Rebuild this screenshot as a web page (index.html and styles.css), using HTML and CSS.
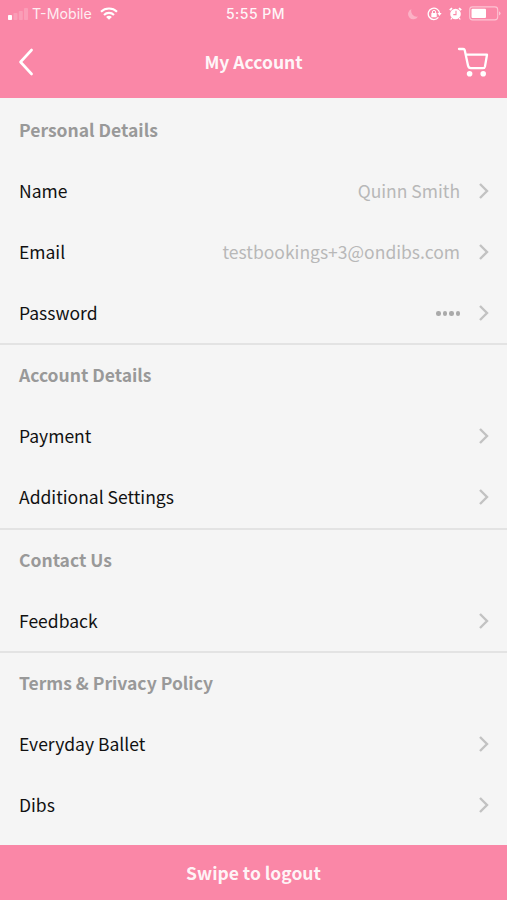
FILE: index.html
```html
<!DOCTYPE html>
<html lang="en">
<head>
<meta charset="utf-8">
<title>My Account</title>
<link rel="stylesheet" href="styles.css">
</head>
<body>
<svg class="defs" width="0" height="0" aria-hidden="true">
  <symbol id="chevron" viewBox="0 0 12 18"><path d="M2 2 9 9 2 16" fill="none" stroke="currentColor" stroke-width="2.4"/></symbol>
</svg>
<div class="screen">
  <header class="header">
    <div class="status">
      <div class="status-left">
        <svg class="signal" width="20" height="14" viewBox="0 0 20 14" fill="#fff"><rect y="8" width="4" height="5" rx=".8"/><g opacity=".18"><rect x="5.5" y="6" width="4" height="7" rx=".8"/><rect x="10.8" y="4" width="4" height="9" rx=".8"/><rect x="16" y="1" width="4" height="12" rx=".8"/></g></svg>
        <span class="carrier">T-Mobile</span>
        <svg class="wifi" width="18" height="13" viewBox="0 0 18 13"><g fill="none" stroke="#fff" stroke-width="2.1"><path d="M1 4.7a11.6 11.6 0 0 1 16 0"/><path d="M4 7.9a7.3 7.3 0 0 1 10 0"/></g><path d="m9 12.8-2.9-2.9a4 4 0 0 1 5.8 0z" fill="#fff"/></svg>
      </div>
      <span class="time">5:55 PM</span>
      <div class="status-right">
        <svg width="12" height="12" viewBox="0 0 12 12"><path d="M4.500 1A5.300 5.300 0 1 0 11 8.500A5.700 5.700 0 0 1 4.500 1z" fill="#fff" opacity=".35"/></svg>
        <svg class="lock" width="15" height="14" viewBox="0 0 15 14"><path d="M11.400 10.400A5.700 5.700 0 1 1 12.600 6.200" fill="none" stroke="#fff" stroke-width="1.300"/><path d="M10.400 6h4.200l-2.100 3z" fill="#fff"/><rect x="4.300" y="6" width="5.400" height="4.200" rx=".5" fill="#fff"/><path d="M5.400 6.200V5a1.600 1.600 0 0 1 3.200 0v1.200" fill="none" stroke="#fff"/></svg>
        <svg class="alarm" width="13" height="13" viewBox="0 0 13 13"><circle cx="6.500" cy="7" r="5.300" fill="#fff"/><path d="M.8 3.200 3 1.200M12.200 3.200 10 1.200" stroke="#fff" stroke-width="1.800"/><path d="M2.800 11 1.800 12.500M10.200 11l1 1.500" stroke="#fff" stroke-width="1.200"/><path d="M7 3.800V7.600H4.300" fill="none" stroke="#fa87a7" stroke-width="1.100"/></svg>
        <svg class="battery" width="32" height="15" viewBox="0 0 32 15"><rect x=".7" y=".9" width="28" height="13" rx="2.800" fill="none" stroke="#fff" stroke-width="1.100" opacity=".5"/><rect x="2.500" y="2.700" width="14.500" height="9.400" rx="1" fill="#fff"/><path d="M30 5.300q3.200 2.100 0 4.200z" fill="#fff" opacity=".5"/></svg>
      </div>
    </div>
    <div class="nav">
      <svg class="back" width="16" height="28" viewBox="0 0 16 28"><path d="M13.600 2 2.500 14l11.100 12" fill="none" stroke="#fff" stroke-width="2.600" stroke-linecap="round" stroke-linejoin="round"/></svg>
      <h1 class="title">My Account</h1>
      <svg class="cart" width="32" height="30" viewBox="0 0 32 30"><path d="M2 2h4.200q1.200 0 1.500 1.100L11 18.600q.6 2.600 2.800 2.600h12q1.800 0 2.200-1.800L30 7.700H8.800" fill="none" stroke="#fff" stroke-width="2.300" stroke-linecap="round" stroke-linejoin="round"/><circle cx="12.600" cy="26.700" r="2.800" fill="#fff"/><circle cx="26.200" cy="26.700" r="2.800" fill="#fff"/></svg>
    </div>
  </header>
  <main class="content">
    <section class="section compact">
      <h2 class="heading">Personal Details</h2>
      <div class="row"><span class="label">Name</span><span class="value">Quinn Smith</span><svg class="chevron"><use href="#chevron"/></svg></div>
      <div class="row"><span class="label">Email</span><span class="value">testbookings+3@ondibs.com</span><svg class="chevron"><use href="#chevron"/></svg></div>
      <div class="row"><span class="label">Password</span><span class="dots"><i></i><i></i><i></i><i></i></span><svg class="chevron"><use href="#chevron"/></svg></div>
    </section>
    <section class="section">
      <h2 class="heading">Account Details</h2>
      <div class="row"><span class="label">Payment</span><svg class="chevron"><use href="#chevron"/></svg></div>
      <div class="row"><span class="label">Additional Settings</span><svg class="chevron"><use href="#chevron"/></svg></div>
    </section>
    <section class="section compact">
      <h2 class="heading">Contact Us</h2>
      <div class="row"><span class="label">Feedback</span><svg class="chevron"><use href="#chevron"/></svg></div>
    </section>
    <section class="section">
      <h2 class="heading">Terms &amp; Privacy Policy</h2>
      <div class="row"><span class="label">Everyday Ballet</span><svg class="chevron"><use href="#chevron"/></svg></div>
      <div class="row"><span class="label">Dibs</span><svg class="chevron"><use href="#chevron"/></svg></div>
    </section>
  </main>
  <footer class="logout">Swipe to logout</footer>
</div>
</body>
</html>
```
FILE: styles.css
```css
* { box-sizing: border-box; }
body { margin: 0; font-family: "Noto Sans CJK SC", "Noto Sans", sans-serif; font-size: 17.5px; color: #111; }
.defs { position: absolute; }
.screen { display: flex; flex-direction: column; height: 900px; background: #f5f5f5; overflow: hidden; }
.header { height: 98px; flex: none; background: #fa87a7; color: #fff; }
.status { display: grid; grid-template-columns: 1fr auto 1fr; align-items: center; height: 27px; padding: 0 6px 0 8px; font: 14.5px/27px Inter, sans-serif; }
.status-left, .status-right { display: flex; align-items: center; }
.status-right { justify-content: flex-end; }
.carrier { margin-left: 4px; opacity: .85; font-size: 14.2px; }
.wifi { margin-left: 8px; }
.time { padding-left: 2px; font-weight: 500; font-size: 14px; letter-spacing: .5px; opacity: .92; }
.lock { margin-left: 8px; }
.alarm { margin-left: 7px; }
.battery { margin-left: 7px; }
.nav { display: grid; grid-template-columns: 40px 1fr 40px; align-items: center; height: 70px; padding: 0 18px; }
.title { margin: 0; padding-bottom: 2px; font-size: 17.5px; font-weight: 700; text-align: center; opacity: .92; }
.cart { justify-self: end; }
.content { flex: 1; padding-top: 2px; }
.section { border-bottom: 2px solid #e3e3e3; }
.section:last-child { border-bottom: 0; }
.heading { margin: 0; height: 61px; padding-left: 19px; font-size: 17.5px; line-height: 59px; font-weight: 700; color: #999; }
.row { display: flex; align-items: center; height: 61px; padding: 0 17px 2px 19px; }
.compact .row:last-child { height: 60px; padding-bottom: 1px; }
.label { flex: 1; }
.value { color: #b8b8b8; }
.dots { display: flex; gap: 2px; padding-top: 2px; }
.dots i { width: 4.500px; height: 4.500px; border-radius: 50%; background: #aaa; }
.chevron { width: 12px; height: 18px; margin-left: 18px; color: #c2c2c2; }
.logout { height: 55px; flex: none; background: #fa87a7; color: rgba(255, 255, 255, .92); font-size: 17.5px; font-weight: 700; line-height: 55px; text-align: center; }
```
